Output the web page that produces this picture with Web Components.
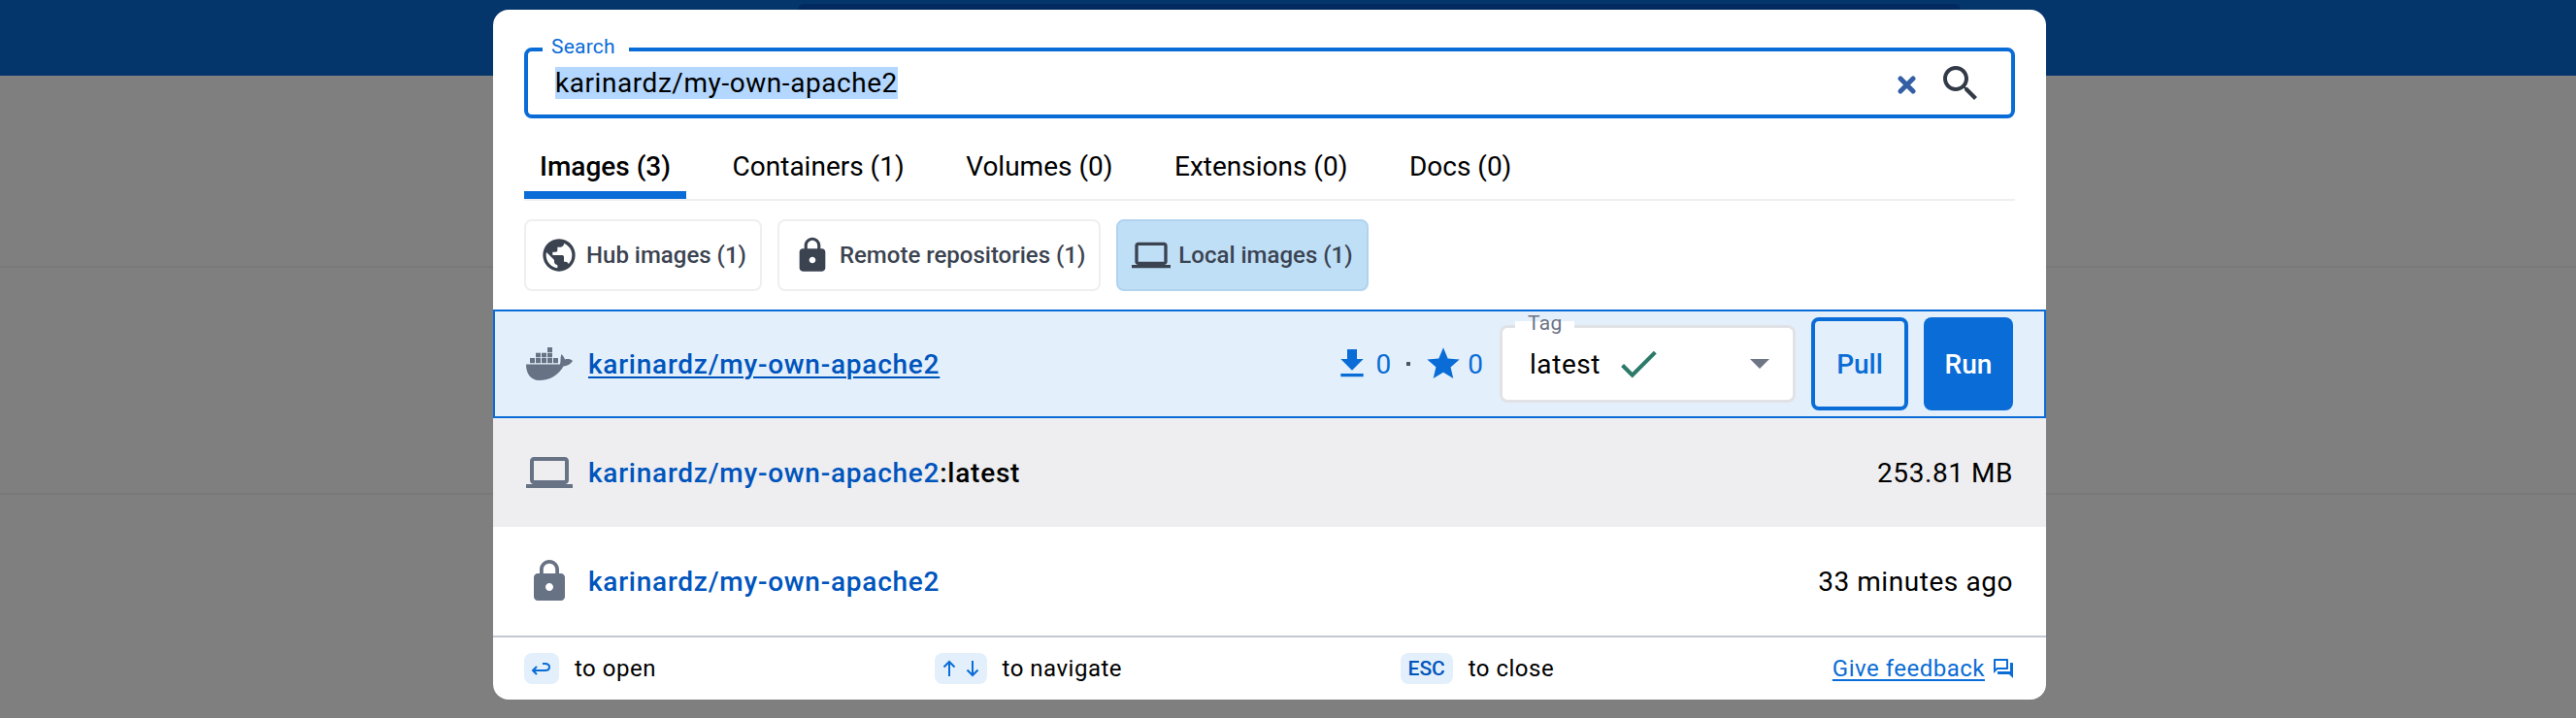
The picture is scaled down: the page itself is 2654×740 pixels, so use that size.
<!DOCTYPE html>
<html><head><meta charset="utf-8"><title>Search</title>
<style>
html,body{margin:0;padding:0;height:740px;overflow:hidden;background:#7f7f7f;font-family:Roboto,"Liberation Sans",sans-serif}
</style></head><body>
<app-backdrop></app-backdrop>
<script>
const P={
laptop:"M20 18c1.1 0 1.99-.9 1.99-2L22 6c0-1.1-.9-2-2-2H4c-1.1 0-2 .9-2 2v10c0 1.1.9 2 2 2H0v2h24v-2h-4zM4 6h16v10H4V6z",
globe:"M12 2C6.48 2 2 6.48 2 12s4.48 10 10 10 10-4.48 10-10S17.52 2 12 2zm-1 17.93c-3.95-.49-7-3.85-7-7.93 0-.62.08-1.21.21-1.79L9 15v1c0 1.1.9 2 2 2v1.93zm6.9-2.54c-.26-.81-1-1.39-1.9-1.39h-1v-3c0-.55-.45-1-1-1H8v-2h2c.55 0 1-.45 1-1V7h2c1.1 0 2-.9 2-2v-.41c2.93 1.19 5 4.06 5 7.41 0 2.08-.8 3.97-2.1 5.39z",
lock:"M18 8h-1V6c0-2.76-2.24-5-5-5S7 3.24 7 6v2H6c-1.1 0-2 .9-2 2v10c0 1.1.9 2 2 2h12c1.1 0 2-.9 2-2V10c0-1.1-.9-2-2-2zm-6 9c-1.1 0-2-.9-2-2s.9-2 2-2 2 .9 2 2-.9 2-2 2zm3.1-9H8.9V6c0-1.71 1.39-3.1 3.1-3.1 1.71 0 3.1 1.39 3.1 3.1v2z",
search:"M15.5 14h-.79l-.28-.27C15.41 12.59 16 11.11 16 9.5 16 5.91 13.09 3 9.5 3S3 5.91 3 9.5 5.91 16 9.5 16c1.61 0 3.09-.59 4.23-1.57l.27.28v.79l5 4.99L20.49 19l-4.99-5zm-6 0C7.01 14 5 11.99 5 9.5S7.01 5 9.5 5 14 7.01 14 9.5 11.99 14 9.5 14z",
download:"M19 9h-4V3H9v6H5l7 7 7-7zM5 18v2h14v-2H5z",
star:"M12 17.27 18.18 21l-1.64-6.97L22 9.24l-7.19-.61L12 2 9.19 8.63 2 9.24l5.46 4.73L5.82 21z",
check:"M9 16.17 4.83 12l-1.42 1.41L9 19 21 7l-1.41-1.41z",
forum:"M15 4v7H5.17L4 12.17V4h11m1-2H3c-.55 0-1 .45-1 1v14l4-4h10c.55 0 1-.45 1-1V3c0-.55-.45-1-1-1zm5 4h-2v9H6v2c0 .55.45 1 1 1h11l4 4V7c0-.55-.45-1-1-1z"
};
const def=(name,css,html,attrs)=>{
  const t=document.createElement('template');
  t.innerHTML=`<style>${css}</style>${html}`;
  customElements.define(name,class extends HTMLElement{
    constructor(){super();this.attachShadow({mode:'open'}).appendChild(t.content.cloneNode(true));}
    connectedCallback(){if(attrs)attrs(this,this.shadowRoot)}
  });
};
def('ui-icon',':host{display:inline-flex;flex:none;line-height:0}svg{display:block;width:100%;height:100%;fill:currentColor}',
 '<svg viewBox="0 0 24 24"><path></path></svg>',
 (h,s)=>{s.querySelector('path').setAttribute('d',P[h.getAttribute('name')]);});
def('docker-mark',':host{display:block;width:48px;height:34px;flex:none}svg{display:block;fill:#677285}',
 `<svg width="48" height="34" viewBox="0 0 48 34">
 <rect x="22" y="0" width="5" height="5"/>
 <rect x="10" y="5.700" width="5" height="4.600"/><rect x="16" y="5.700" width="5" height="4.600"/><rect x="22" y="5.700" width="5" height="4.600"/>
 <rect x="4" y="11" width="5" height="5.200"/><rect x="10" y="11" width="5" height="5.200"/><rect x="16" y="11" width="5" height="5.200"/><rect x="22" y="11" width="5" height="5.200"/><rect x="28" y="11" width="5" height="5.200"/>
 <path d="M0 17.500H35C36 14 35 10 36.500 7C38.500 9 39.500 11 40 12.500C43 11.500 46 12 48 14C46 17.500 42 19.300 38.500 19.500C34 28 25 34 13.500 34C4 34 0 26 0 17.500Z"/></svg>`);
def('search-field',`:host{display:flex;position:relative;box-sizing:border-box;height:73px;border:4px solid #0a6cd6;border-radius:8px;align-items:center;padding:0 0 0 28px}
 .label{position:absolute;left:15px;top:-17px;padding:0 14px 0 9px;background:#fff;color:#0a6cd6;font-size:21px;line-height:24px;letter-spacing:.2px}
 .v{flex:1;font-size:28px;line-height:33px;color:#000;letter-spacing:.56px}
 .v span{background:#b3d7ff}
 .x{display:block;width:19px;height:19px;margin-right:22px;margin-top:3px}
 .s{width:48px;height:48px;color:#333a47;margin-right:28px}`,
 `<span class="label">Search</span><div class="v"><span>karinardz/my-own-apache2</span></div><svg class="x" viewBox="0 0 19 19" fill="none" stroke="#345fa5" stroke-width="5" stroke-linecap="round"><path d="M3 3L16 16M16 3L3 16"/></svg><ui-icon class="s" name="search"></ui-icon>`);
def('tab-item',`:host{display:flex;box-sizing:border-box;height:67px;padding:0 16px;align-items:center;font-size:28px;color:#000;white-space:nowrap;position:relative}
 :host([active]){font-weight:500;}
 :host([active])::after{content:"";position:absolute;left:0;right:0;bottom:0;height:8px;background:#0a6cd6}`,'<slot></slot>');
def('tab-bar',':host{display:flex;gap:31.500px;margin-top:16px;border-bottom:2px solid #efeff1}','<slot></slot>');
def('filter-chip',`:host{display:inline-flex;box-sizing:border-box;height:74px;align-items:center;gap:8px;padding:0 14px 0 14px;border:2px solid #eeeff1;border-radius:8px;color:#3b4351;font-size:24px;font-weight:500;white-space:nowrap}
 :host([on]){background:#bfdff7;border-color:#b1d3ef}
 ui-icon{width:40px;height:40px}`,'<ui-icon></ui-icon><slot></slot>',
 (h,s)=>{const i=s.querySelector('ui-icon');i.setAttribute('name',h.getAttribute('icon'));i.shadowRoot.querySelector('path').setAttribute('d',P[h.getAttribute('icon')]);});
def('chip-row',':host{display:flex;gap:16px;margin:19px 0}','<slot></slot>');
def('result-row',`:host{display:flex;box-sizing:border-box;height:112px;align-items:center;padding:0 34px;font-size:28px;color:#000;white-space:nowrap;letter-spacing:.56px}
 :host([sel]){background:#e3f0fb;border:2px solid #0a6cd6;padding:0 32px}
 :host([grey]){background:#eeeef0}
 .ic{display:flex;width:48px;height:48px;align-items:center;justify-content:center;margin-right:16px;color:#677285}
 .sp{flex:1}`,
 '<div class="ic"><slot name="icon"></slot></div><slot></slot><div class="sp"></div><slot name="end"></slot>');
def('repo-name',`:host{display:inline;color:#0055bd;font-weight:500;letter-spacing:.75px}
 :host([u]){text-decoration:underline;text-decoration-thickness:2px;text-underline-offset:3px}`,'<slot></slot>');
def('hub-stats',`:host{display:flex;align-items:center;color:#0a6cd6;font-size:28px;letter-spacing:0}
 ui-icon{width:40px;height:40px}
 .d{width:4px;height:4px;background:#4b5563;margin:0 14px 0 16px}
 .n{margin-left:5px}`,
 `<ui-icon name="download"></ui-icon><span class="n">0</span><span class="d"></span><ui-icon name="star"></ui-icon><span class="n">0</span>`);
def('tag-select',`:host{display:flex;position:relative;box-sizing:border-box;width:305px;height:80px;margin-left:17px;background:#fff;border:3px solid #e1e2e6;border-radius:8px;align-items:center;padding:0 0 0 28px;font-size:28px;color:#000}
 .l{position:absolute;left:13px;top:-16px;padding:0 12px 0 13px;height:20px;line-height:22px;background:linear-gradient(#e3f0fb 45%,#fff 45%);color:#6b7385;font-size:21px;letter-spacing:.4px}
 ui-icon{width:50px;height:50px;color:#2b7a6a;margin-left:14px}
 .a{margin-left:auto;margin-right:24px;width:0;height:0;border-left:10px solid transparent;border-right:10px solid transparent;border-top:10px solid #6e7585}`,
 `<span class="l">Tag</span><span>latest</span><ui-icon name="check"></ui-icon><span class="a"></span>`);
def('act-btn',`:host{display:flex;box-sizing:border-box;height:96px;align-items:center;justify-content:center;border-radius:8px;font-size:28px;font-weight:500;letter-spacing:0}
 :host([outline]){width:100px;margin-left:16px;border:4px solid #0a6cd6;color:#0a6cd6}
 :host([solid]){width:92px;margin-left:16px;background:#0a6cd6;color:#fff}`,'<slot></slot>');
def('key-cap',`:host{display:inline-flex;box-sizing:border-box;height:32px;width:36px;gap:10px;align-items:center;justify-content:center;background:#e3f0fb;border-radius:8px;color:#0a6cd6;font-size:22px;font-weight:500;letter-spacing:0}
 :host([wide]){width:54px}
 :host([esc]){color:#0055bd;font-size:21px;width:54px}`,'<slot></slot>');
def('hint-item',':host{display:flex;align-items:center;gap:16px;font-size:24px;color:#000;letter-spacing:.5px}','<slot></slot>');
def('feedback-link',`:host{display:flex;align-items:center;gap:7px;font-size:24px;color:#0a6cd6;letter-spacing:.5px}
 a{color:inherit;text-underline-offset:3px}
 ui-icon{width:24px;height:24px}`,'<a href="#" onclick="return false">Give feedback</a><ui-icon name="forum"></ui-icon>');
def('hint-bar',':host{display:flex;box-sizing:border-box;height:66px;padding:0 32px;align-items:center;justify-content:space-between;border-top:2px solid #c4c8d2}','<slot></slot>');
def('search-dialog',`:host{display:block;position:absolute;left:508px;top:10px;width:1600px;height:711px;background:#fff;border-radius:16px;overflow:hidden}
 .pad{padding:39px 32px 0 32px}`,
 `<div class="pad">
  <search-field></search-field>
  <tab-bar><tab-item active>Images (3)</tab-item><tab-item>Containers (1)</tab-item><tab-item>Volumes (0)</tab-item><tab-item>Extensions (0)</tab-item><tab-item>Docs (0)</tab-item></tab-bar>
  <chip-row><filter-chip icon="globe">Hub images (1)</filter-chip><filter-chip icon="lock">Remote repositories (1)</filter-chip><filter-chip icon="laptop" on>Local images (1)</filter-chip></chip-row>
 </div>
 <result-row sel><docker-mark slot="icon"></docker-mark><repo-name u>karinardz/my-own-apache2</repo-name><hub-stats slot="end"></hub-stats><tag-select slot="end"></tag-select><act-btn slot="end" outline>Pull</act-btn><act-btn slot="end" solid>Run</act-btn></result-row>
 <result-row grey><ui-icon slot="icon" name="laptop" style="width:48px;height:48px"></ui-icon><repo-name>karinardz/my-own-apache2</repo-name><b style="font-weight:500;letter-spacing:.75px">:latest</b><span slot="end">253.81 MB</span></result-row>
 <result-row><ui-icon slot="icon" name="lock" style="width:48px;height:48px"></ui-icon><repo-name>karinardz/my-own-apache2</repo-name><span slot="end">33 minutes ago</span></result-row>
 <hint-bar>
  <hint-item><key-cap><svg width="22" height="22" viewBox="0 0 22 22" fill="none" stroke="currentColor" stroke-width="2"><path d="M2 13H14.500C17.500 13 19 11.500 19 9.500S17.500 6 14.500 6H12M6 9L2 13L6 17"/></svg></key-cap>to open</hint-item>
  <hint-item><key-cap wide><svg width="14" height="18" viewBox="0 0 14 18" fill="none" stroke="currentColor" stroke-width="2"><path d="M7 17V2M1.500 7.500L7 2L12.500 7.500"/></svg><svg width="14" height="18" viewBox="0 0 14 18" fill="none" stroke="currentColor" stroke-width="2"><path d="M7 1V16M1.500 10.500L7 16L12.500 10.500"/></svg></key-cap>to navigate</hint-item>
  <hint-item><key-cap esc>ESC</key-cap>to close</hint-item>
  <feedback-link></feedback-link>
 </hint-bar>`);
def('app-backdrop',`:host{display:block;position:relative;height:740px;background:#7f7f7f}
 .hd{height:78px;box-sizing:border-box;padding-top:4px;background:#04366c;display:flex;justify-content:center}
 .bar{width:1198px;height:6px;margin-left:188px;background:#022a60;border-radius:8px 8px 0 0}
 .ln{height:2px;background:#797979;margin-top:196px}
 .ln2{height:2px;background:#797979;margin-top:232px}`,
 '<div class="hd"><div class="bar"></div></div><div class="ln"></div><div class="ln2"></div><search-dialog></search-dialog>');
</script>
</body></html>
